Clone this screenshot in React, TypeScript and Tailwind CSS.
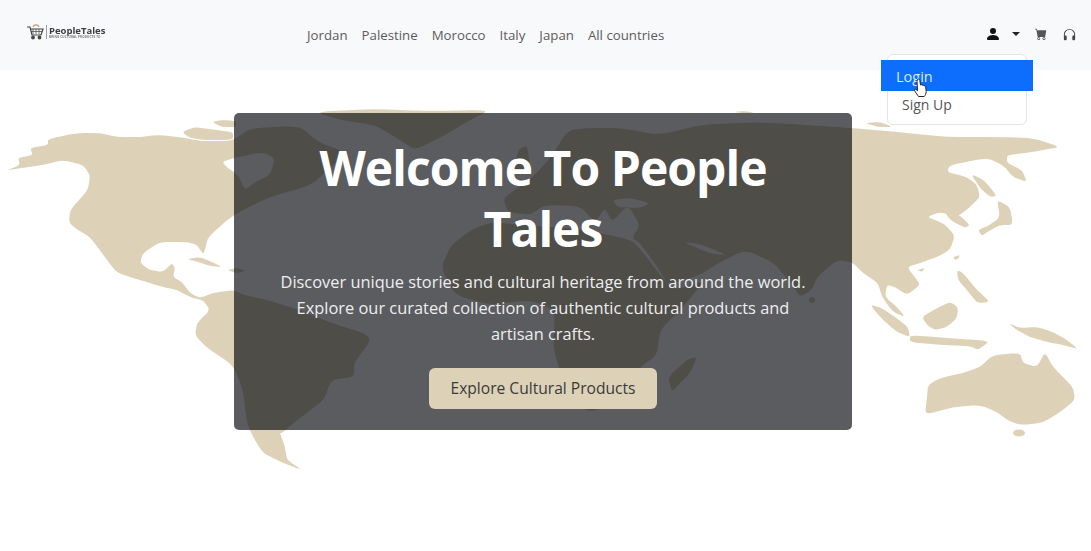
import { BsCartFill, BsHeadphones, BsPersonFill } from 'react-icons/bs'

const links = ['Jordan', 'Palestine', 'Morocco', 'Italy', 'Japan', 'All countries']

const land = [
  // north america
  '8,170 20,165 18,158 33,155 30,148 48,145 48,139 77,133 100,133 117,137 140,137 157,135 180,137 200,141 233,141 250,128 300,126 318,142 345,152 330,168 311,185 267,198 233,215 208,237 205,250 203,254 197,245 187,242 160,242 143,253 140,263 150,270 163,272 172,263 175,268 173,277 182,282 190,293 200,298 213,293 233,290 244,295 267,300 300,310 331,323 364,333 371,340 354,363 354,377 331,380 324,400 301,417 282,433 280,433 285,447 287,460 302,470 283,463 263,453 253,437 247,423 243,390 233,365 207,348 195,335 197,323 210,310 203,300 192,298 177,290 163,287 140,280 117,273 107,260 90,237 78,230 69,223 70,210 88,190 90,175 83,165 63,160 43,165 8,170',
  // arctic islands
  '182,132 195,127 215,130 233,132 233,140 205,140 190,138',
  '212,122 222,120 236,121 236,127 222,127',
  // greenland
  '315,112 370,109 430,111 490,110 470,120 445,135 415,150 400,140 375,125 340,120',
  // cuba, hispaniola
  '187,259 200,257 212,262 222,267 210,266 198,262',
  '227,270 237,268 246,271 236,273',
  // eurasia
  '852,128 897,132 947,137 997,137 1033,138 1060,147 1043,150 1027,153 1007,155 1007,163 1022,170 1027,182 1013,177 1003,165 987,158 950,165 947,172 967,177 977,185 980,197 970,207 957,217 940,212 927,217 943,223 955,235 950,250 937,257 920,263 907,267 917,280 920,285 907,295 895,287 887,285 885,297 897,307 905,317 893,312 882,297 878,283 863,273 852,262 837,260 817,277 812,290 800,297 790,282 773,262 745,250 720,262 700,275 668,285 658,268 640,243 632,238 640,225 628,205 612,222 605,208 595,222 580,206 545,205 530,215 508,212 503,198 530,180 551,157 568,130 590,128 620,128 660,135 700,125 760,122',
  // africa
  '441,268 451,245 474,228 494,222 530,226 570,228 600,233 632,240 645,255 664,280 675,290 705,280 683,307 660,330 657,355 640,367 610,405 590,412 570,400 553,350 555,310 530,300 490,305 455,295',
  // islands around asia and oceania
  '518,150 527,145 530,165 524,175 514,172',
  '697,357 688,359 668,377 672,392 680,383 690,373',
  '865,123 880,122 893,127 878,127',
  '733,112 745,111 755,113 743,113',
  '945,212 958,214 970,225 965,228 950,220',
  '971,174 984,180 997,196 990,197 980,188',
  '978,230 990,225 1000,217 997,200 1010,207 1013,225 1000,225 987,232 982,236',
  '953,257 960,255 958,259 955,260',
  '917,270 925,268 922,272',
  '957,270 963,273 977,290 990,302 977,303 967,290 958,280',
  '870,305 880,307 895,317 908,327 910,337 897,332 883,320',
  '910,335 947,338 990,341 978,350 970,346 940,345 910,342',
  '922,317 937,308 950,302 958,307 957,318 947,327 935,330 927,325',
  '1008,323 1020,328 1037,327 1053,332 1067,340 1078,349 1063,345 1047,342 1030,337 1017,330',
  '928,385 940,378 963,373 980,367 993,355 1020,353 1023,363 1037,367 1045,352 1053,367 1073,387 1075,400 1063,410 1043,423 1020,425 1007,420 997,412 980,405 953,407 925,415 927,397',
]

const water = [
  // hudson bay, baffin bay, baja
  '222,162 234,158 262,152 275,158 270,175 255,182 245,190 238,175 228,168',
  '317,122 345,122 367,127 362,136 340,142 322,138',
  '88,236 97,258 92,252 85,240',
  // black sea, persian gulf
  '612,200 630,198 650,203 640,208 618,207',
  '683,242 700,244 727,255 712,254',
]

// rounds the corners of a traced outline so the coast doesn't look faceted
function smoothPath(points: string) {
  const pts = points.split(' ').map((p) => p.split(',').map(Number))
  const at = (a: number[], b: number[], t: number) => `${a[0] + (b[0] - a[0]) * t} ${a[1] + (b[1] - a[1]) * t}`
  return (
    pts
      .map((p, i) => {
        const prev = pts[(i + pts.length - 1) % pts.length]
        const next = pts[(i + 1) % pts.length]
        return `${i === 0 ? 'M' : 'L'}${at(p, prev, 0.3)} Q${p[0]} ${p[1]} ${at(p, next, 0.3)}`
      })
      .join(' ') + 'Z'
  )
}

function WorldMap() {
  return (
    <svg className="absolute top-0 left-0 h-[551px] w-[1091px]" viewBox="0 0 1091 551" aria-hidden="true">
      {land.map((points) => (
        <path key={points} d={smoothPath(points)} fill="#ddd2b8" />
      ))}
      {water.map((points) => (
        <path key={points} d={smoothPath(points)} fill="#ffffff" />
      ))}
      <ellipse cx="1019" cy="433" rx="6" ry="3.5" fill="#ddd2b8" />
      <circle cx="812" cy="300" r="3" fill="#ddd2b8" />
    </svg>
  )
}

function Logo() {
  return (
    <div className="flex items-center gap-[2px] blur-[0.4px]">
      <svg className="h-[16px] w-[17px]" viewBox="0 0 17 16" fill="none" stroke="#444" strokeWidth="1.2" aria-hidden="true">
        <path d="M0 3h3l2 8h9l2-6H4" />
        <path d="M6 5v5M9 5v5M12 5v5M4 7.500h11" strokeWidth="0.7" />
        <circle cx="6" cy="13.500" r="1.300" fill="#444" />
        <circle cx="12.500" cy="13.500" r="1.300" fill="#444" />
        <path d="M6 3c1-3 5-3 6 0" stroke="#c9a48c" strokeWidth="1.500" />
      </svg>
      <div className="h-[14px] w-px bg-gray-400" />
      <div className="flex flex-col">
        <span className="text-[9.5px] leading-[9px] font-bold tracking-[0px] text-[#3c3c44]">PeopleTales</span>
        <span className="text-[3px] leading-[4px] font-bold tracking-[0.15px] text-[#777]">BRING CULTURAL PRODUCTS TO</span>
      </div>
    </div>
  )
}

function Navbar() {
  return (
    <nav className="relative flex h-[70px] items-start bg-[#f8f9fa] pr-[14px] pl-[27px]">
      <div className="mt-[24px] w-[280px]">
        <Logo />
      </div>
      <div className="mt-[25px] flex items-center gap-[14px] text-[13.25px] leading-[20px] text-[#5c5c5c]">
        {links.map((link) => (
          <span key={link}>{link}</span>
        ))}
      </div>
      <div className="mt-[26px] ml-auto flex items-center">
        <BsPersonFill className="h-[16px] w-[16px] text-[#111]" />
        <span className="ml-[11px] h-0 w-0 border-x-[4px] border-t-[4px] border-x-transparent border-t-[#222]" />
        <BsCartFill className="ml-[15px] h-[12px] w-[12px] text-[#555]" />
        <BsHeadphones className="ml-[15px] h-[15px] w-[15px] text-[#444]" />
      </div>
      <Dropdown />
    </nav>
  )
}

function Dropdown() {
  return (
    <div className="absolute top-[54px] left-[887px] z-10 h-[71px] w-[140px] rounded-[6px] border border-[#e4e4e4] bg-white">
      <div className="absolute top-[5px] -left-[7px] flex h-[31px] w-[152px] items-center bg-[#0d6efd] pt-[2px] pl-[15px] text-[14.5px] text-[#dce9ff]">
        Login
      </div>
      <div className="absolute top-[40px] left-[14px] text-[14px] leading-[20px] text-[#555]">Sign Up</div>
      <svg className="absolute top-[23px] left-[25px] h-[20px] w-[15px]" viewBox="0 0 15 20" aria-hidden="true">
        <path
          d="M4.500 1.500c.8-.8 2-.5 2.300.7l.7 4.800 1-.3c.6 0 1 .2 1.200.7 .6-.3 1.200-.1 1.500.5 .6-.2 1.300 0 1.500.8l.5 4.800c0 2-1 4-2 5H5.500c-1-1.500-2.500-3.500-4-6-.4-.8.500-1.700 1.400-1.200l1.600 1.400-.5-9.200c0-.6.200-1 .5-1.200z"
          fill="#fff"
          stroke="#222"
          strokeWidth="1"
        />
      </svg>
    </div>
  )
}

export default function App() {
  return (
    <div className="relative h-[551px] w-[1091px] overflow-hidden bg-white font-['Open_Sans','Noto_Sans',sans-serif]">
      <WorldMap />
      <Navbar />
      <main className="relative pt-[43px] pl-[234px]">
        <section className="flex h-[317px] w-[618px] flex-col items-center rounded-[5px] bg-[#05070e]/66 px-[40px] pt-[24px] text-center">
          <h1 className="text-[48px] leading-[61px] font-bold tracking-[-0.95px] text-white">Welcome To People Tales</h1>
          <p className="mt-[10px] text-[16.4px] leading-[26px] text-[#eeeeee]">
            Discover unique stories and cultural heritage from around the world. Explore our curated collection of
            authentic cultural products and artisan crafts.
          </p>
          <button
            type="button"
            className="mt-[21px] flex h-[41px] w-[228px] items-center justify-center rounded-[6px] bg-[#ddd2b8] text-[15.6px] text-[#3a3a3a]"
          >
            Explore Cultural Products
          </button>
        </section>
      </main>
    </div>
  )
}
